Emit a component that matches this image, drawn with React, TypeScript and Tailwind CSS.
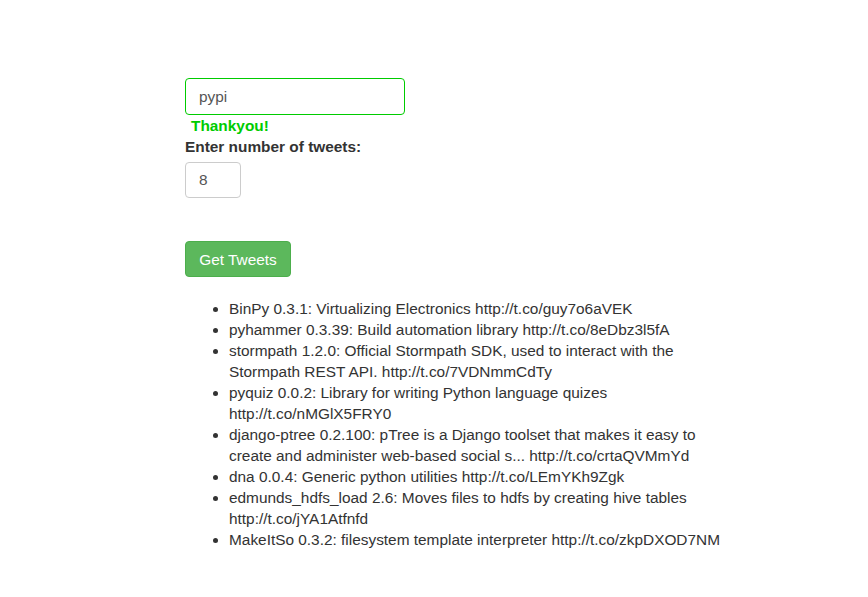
const tweets = [
  "BinPy 0.3.1: Virtualizing Electronics http://t.co/guy7o6aVEK",
  "pyhammer 0.3.39: Build automation library http://t.co/8eDbz3l5fA",
  "stormpath 1.2.0: Official Stormpath SDK, used to interact with the Stormpath REST API. http://t.co/7VDNmmCdTy",
  "pyquiz 0.0.2: Library for writing Python language quizes http://t.co/nMGlX5FRY0",
  "django-ptree 0.2.100: pTree is a Django toolset that makes it easy to create and administer web-based social s... http://t.co/crtaQVMmYd",
  "dna 0.0.4: Generic python utilities http://t.co/LEmYKh9Zgk",
  "edmunds_hdfs_load 2.6: Moves files to hdfs by creating hive tables http://t.co/jYA1Atfnfd",
  "MakeItSo 0.3.2: filesystem template interpreter http://t.co/zkpDXOD7NM",
];

const App = () => {
  return (
    <div className="min-h-[597px] bg-white pl-[185px] pt-[78px] text-[15.4px] leading-[21px] text-[#333] [font-family:'Liberation_Sans',Arial,sans-serif]">
      <div className="flex flex-col items-start">
        <input
          type="text"
          defaultValue="pypi"
          className="h-[37px] w-[220px] rounded border border-[#00cc00] px-[13px] text-[15.4px] text-[#555] outline-none"
        />
        <span className="mt-0 pl-[6px] font-bold text-[#00cc00]">Thankyou!</span>
        <label className="font-bold">Enter number of tweets:</label>
        <input
          type="text"
          defaultValue="8"
          className="mt-[5px] h-[36px] w-[56px] rounded border border-[#ccc] px-[13px] text-[15.4px] text-[#555] outline-none"
        />
        <button className="mt-[43px] h-[36px] w-[106px] rounded border border-[#4cae4c] bg-[#5cb85c] text-[15.4px] text-white">
          Get Tweets
        </button>
      </div>
      <ul className="mt-[21px] ml-[4px] w-[544px] list-disc pl-[40px]">
        {tweets.map((t) => (
          <li key={t}>{t}</li>
        ))}
      </ul>
    </div>
  );
};

export default App;
